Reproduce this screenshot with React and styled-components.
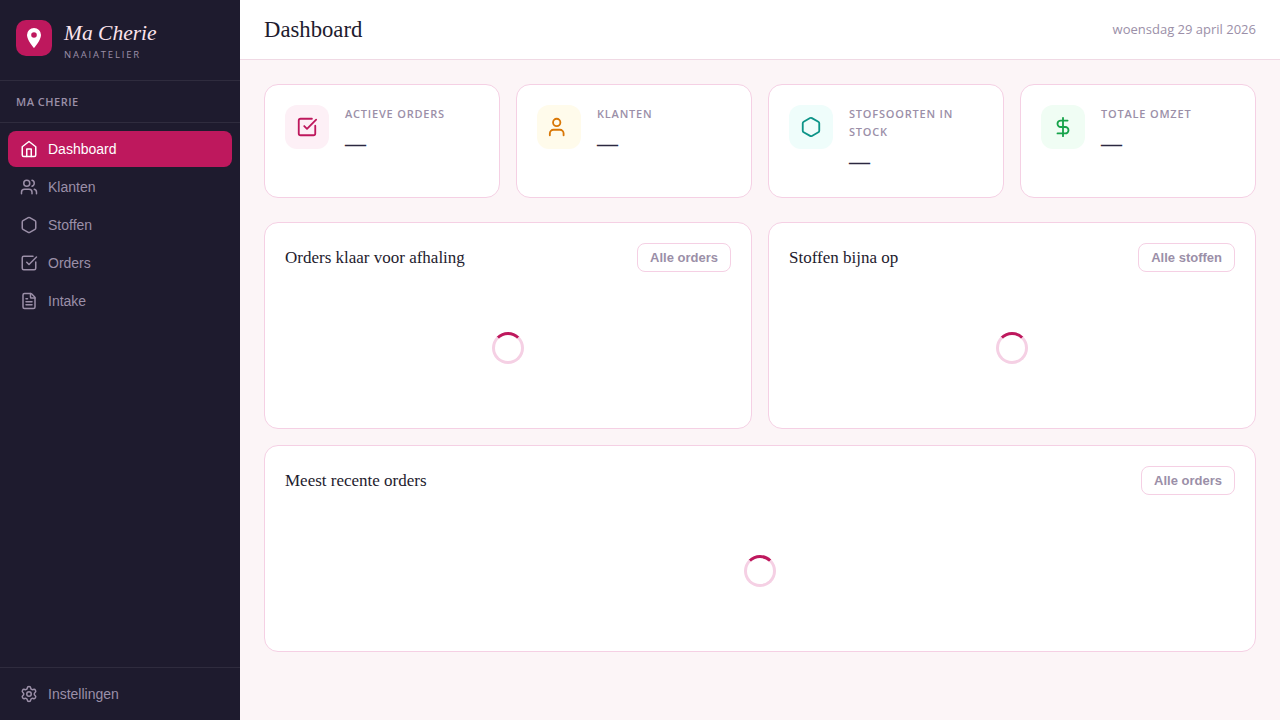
import React from "react";
import styled, { createGlobalStyle } from "styled-components";
import { Users, Hexagon, SquareCheckBig, FileText, Settings, DollarSign } from "lucide-react";

const Global = createGlobalStyle`
  * { box-sizing: border-box; }
  html, body { margin: 0; padding: 0; height: 100%; }
  body { font-family: "Liberation Sans", Arial, sans-serif; background: #fcf5f7; }
`;

const Layout = styled.div`
  display: flex;
  height: 720px;
  overflow: hidden;
`;

const Sidebar = styled.aside`
  width: 240px;
  flex-shrink: 0;
  background: #1e1b2e;
  display: flex;
  flex-direction: column;
`;

const Brand = styled.div`
  height: 81px;
  padding: 20px 16px 0;
  display: flex;
  gap: 12px;
  border-bottom: 1px solid rgba(255, 255, 255, 0.08);
`;

const BrandIcon = styled.div`
  width: 36px;
  height: 36px;
  border-radius: 10px;
  background: #be185d;
  display: flex;
  align-items: center;
  justify-content: center;
`;

const BrandName = styled.div`
  font-family: "Liberation Serif", serif;
  font-style: italic;
  font-size: 21.5px;
  line-height: 26px;
  color: #fce4ec;
`;

const BrandSub = styled.div`
  font-family: "Open Sans", sans-serif;
  font-size: 9.5px;
  line-height: 12px;
  margin-top: 3px;
  letter-spacing: 1.8px;
  color: #9b8fa8;
`;

const Section = styled.div`
  height: 42px;
  padding: 0 16px;
  display: flex;
  align-items: center;
  font-family: "Open Sans", sans-serif;
  font-size: 11px;
  font-weight: 600;
  letter-spacing: 0.5px;
  color: #9b8fa8;
  border-bottom: 1px solid rgba(255, 255, 255, 0.08);
`;

const Nav = styled.nav`
  flex: 1;
  padding: 8px;
  display: flex;
  flex-direction: column;
  gap: 2px;
`;

const NavItem = styled.a`
  height: 36px;
  padding: 0 12px;
  border-radius: 8px;
  display: flex;
  align-items: center;
  gap: 10px;
  font-size: 14px;
  color: ${(p) => (p.$active ? "#fff" : "#9b8fa8")};
  background: ${(p) => (p.$active ? "#be185d" : "transparent")};
`;

const SideFooter = styled.div`
  padding: 8px;
  height: 53px;
  border-top: 1px solid rgba(255, 255, 255, 0.08);
`;

const Main = styled.main`
  flex: 1;
  display: flex;
  flex-direction: column;
  min-width: 0;
`;

const Topbar = styled.header`
  height: 60px;
  padding: 0 24px 2px;
  background: #fff;
  border-bottom: 1px solid #f0d9e4;
  display: flex;
  align-items: center;
  justify-content: space-between;
`;

const Title = styled.h1`
  margin: 2px 0 0;
  font-family: "Liberation Serif", serif;
  font-size: 22.7px;
  font-weight: 400;
  color: #1e1b2e;
`;

const DateText = styled.span`
  font-family: "Open Sans", sans-serif;
  font-size: 13px;
  color: #9b8fa8;
`;

const Content = styled.div`
  padding: 24px;
  display: flex;
  flex-direction: column;
`;

const Stats = styled.div`
  display: grid;
  grid-template-columns: repeat(4, 1fr);
  gap: 16px;
  margin-bottom: 24px;
`;

const Card = styled.div`
  background: #fff;
  border: 1px solid #f5d0e4;
  border-radius: 14px;
  padding: 20px;
`;

const StatCard = styled(Card)`
  display: flex;
  gap: 16px;
  align-items: flex-start;
`;

const StatIcon = styled.div`
  width: 44px;
  height: 44px;
  flex-shrink: 0;
  border-radius: 12px;
  background: ${(p) => p.$bg};
  color: ${(p) => p.$color};
  display: flex;
  align-items: center;
  justify-content: center;
`;

const StatLabel = styled.div`
  font-family: "Open Sans", sans-serif;
  font-size: 11px;
  font-weight: 600;
  line-height: 18px;
  letter-spacing: 0.8px;
  color: #9b8fa8;
`;

const StatValue = styled.div`
  font-family: "Liberation Serif", serif;
  font-size: 21px;
  font-weight: 700;
  line-height: 36px;
  padding-top: 3px;
  height: 36px;
  color: #2b2840;
`;

const Panels = styled.div`
  display: grid;
  grid-template-columns: repeat(2, 1fr);
  gap: 16px;
  margin-bottom: 16px;
`;

const PanelHead = styled.div`
  display: flex;
  align-items: center;
  justify-content: space-between;
  margin-bottom: 16px;
`;

const PanelTitle = styled.h2`
  margin: 0;
  font-family: "Liberation Serif", serif;
  font-size: 17px;
  font-weight: 400;
  color: #1e1b2e;
`;

const GhostButton = styled.button`
  height: 29px;
  padding: 0 12px;
  background: #fff;
  border: 1px solid #f5d0e4;
  border-radius: 8px;
  font-family: "Liberation Sans", sans-serif;
  font-size: 13px;
  font-weight: 700;
  color: #9b8fa8;
`;

const Loader = styled.div`
  height: 120px;
  display: flex;
  align-items: center;
  justify-content: center;
`;

const Spinner = styled.div`
  width: 32px;
  height: 32px;
  border-radius: 50%;
  border: 3px solid #f5d0e4;
  border-top-color: #be185d;
`;

const HomeIcon = ({ size = 18, strokeWidth = 2 }) => (
  <svg width={size} height={size} viewBox="0 0 24 24" fill="none" stroke="currentColor" strokeWidth={strokeWidth} strokeLinecap="round" strokeLinejoin="round">
    <path d="M3 9l9-7 9 7v11a2 2 0 0 1-2 2H5a2 2 0 0 1-2-2z" />
    <polyline points="9 22 9 12 15 12 15 22" />
  </svg>
);

const PersonIcon = ({ size = 22, strokeWidth = 2 }) => (
  <svg width={size} height={size} viewBox="0 0 24 24" fill="none" stroke="currentColor" strokeWidth={strokeWidth} strokeLinecap="round" strokeLinejoin="round">
    <path d="M2 21v-2a4 4 0 0 1 4-4h7a4 4 0 0 1 4 4v2" />
    <circle cx="9.500" cy="7" r="4" />
  </svg>
);

const nav = [
  ["Dashboard", HomeIcon],
  ["Klanten", Users],
  ["Stoffen", Hexagon],
  ["Orders", SquareCheckBig],
  ["Intake", FileText],
];

const stats = [
  ["ACTIEVE ORDERS", SquareCheckBig, "#fdf0f6", "#be185d"],
  ["KLANTEN", PersonIcon, "#fffbeb", "#d97706"],
  ["STOFSOORTEN IN STOCK", Hexagon, "#effdfb", "#0d9488"],
  ["TOTALE OMZET", DollarSign, "#f0fdf4", "#16a34a"],
];

const Panel = ({ title, action }) => (
  <Card>
    <PanelHead>
      <PanelTitle>{title}</PanelTitle>
      <GhostButton>{action}</GhostButton>
    </PanelHead>
    <Loader>
      <Spinner />
    </Loader>
  </Card>
);

export default function App() {
  return (
    <Layout>
      <Global />
      <Sidebar>
        <Brand>
          <BrandIcon>
            <svg width="24" height="24" viewBox="0 0 24 24">
              <path
                fill="#fff"
                fillRule="evenodd"
                d="M12 2a7 7 0 0 0-7 7c0 5.250 7 13 7 13s7-7.750 7-13a7 7 0 0 0-7-7zm0 4.200a2.800 2.800 0 1 1 0 5.600 2.800 2.800 0 0 1 0-5.600z"
              />
            </svg>
          </BrandIcon>
          <div>
            <BrandName>Ma Cherie</BrandName>
            <BrandSub>NAAIATELIER</BrandSub>
          </div>
        </Brand>
        <Section>MA CHERIE</Section>
        <Nav>
          {nav.map(([label, Icon], i) => (
            <NavItem key={label} $active={i === 0}>
              <Icon size={18} strokeWidth={2} />
              {label}
            </NavItem>
          ))}
        </Nav>
        <SideFooter>
          <NavItem>
            <Settings size={18} strokeWidth={2} />
            Instellingen
          </NavItem>
        </SideFooter>
      </Sidebar>
      <Main>
        <Topbar>
          <Title>Dashboard</Title>
          <DateText>woensdag 29 april 2026</DateText>
        </Topbar>
        <Content>
          <Stats>
            {stats.map(([label, Icon, bg, color]) => (
              <StatCard key={label}>
                <StatIcon $bg={bg} $color={color}>
                  <Icon size={22} strokeWidth={2} />
                </StatIcon>
                <div>
                  <StatLabel>{label}</StatLabel>
                  <StatValue>—</StatValue>
                </div>
              </StatCard>
            ))}
          </Stats>
          <Panels>
            <Panel title="Orders klaar voor afhaling" action="Alle orders" />
            <Panel title="Stoffen bijna op" action="Alle stoffen" />
          </Panels>
          <Panel title="Meest recente orders" action="Alle orders" />
        </Content>
      </Main>
    </Layout>
  );
}
